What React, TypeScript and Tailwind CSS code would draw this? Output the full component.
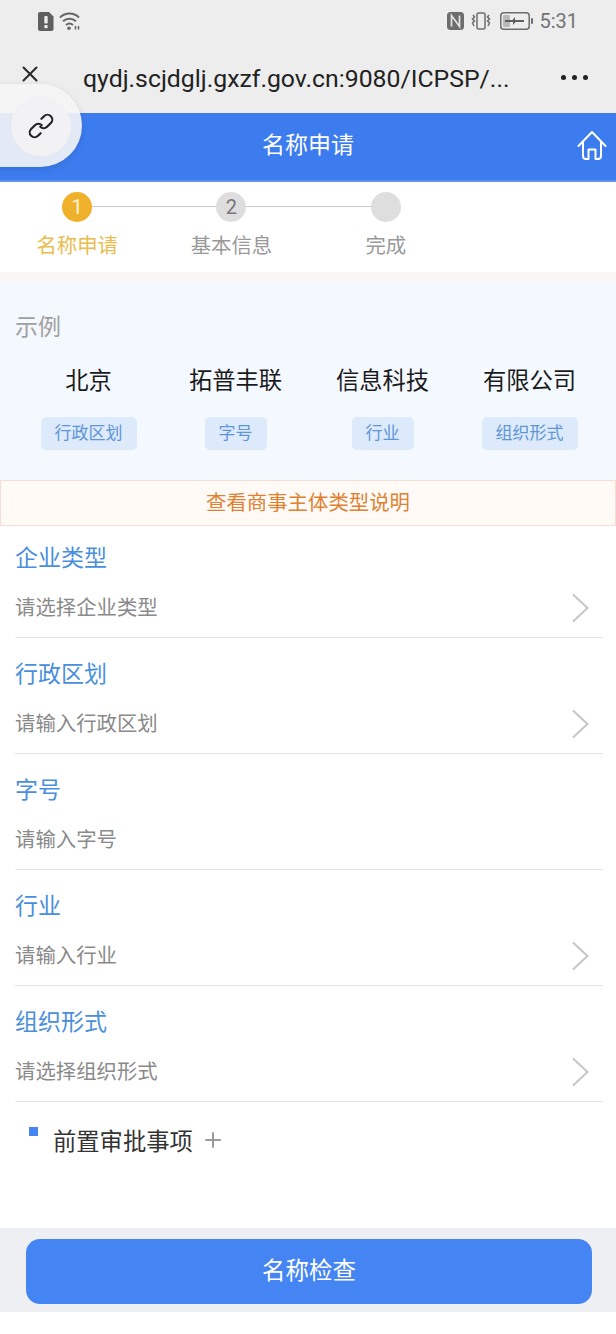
import { Plus, X } from "lucide-react";

const font = { cjk: "font-['Roboto','Noto_Sans_CJK_SC',sans-serif]" };

const exampleColumns = [
  { name: "北京", tag: "行政区划" },
  { name: "拓普丰联", tag: "字号" },
  { name: "信息科技", tag: "行业" },
  { name: "有限公司", tag: "组织形式" },
];

const fields = [
  { label: "企业类型", hint: "请选择企业类型", arrow: true },
  { label: "行政区划", hint: "请输入行政区划", arrow: true },
  { label: "字号", hint: "请输入字号", arrow: false },
  { label: "行业", hint: "请输入行业", arrow: true },
  { label: "组织形式", hint: "请选择组织形式", arrow: true },
];

function StatusBar() {
  return (
    <div className="h-[42px] flex items-center pl-[38px] pr-[38px] text-[#6d6d6d]">
      <svg width="16" height="19" viewBox="0 0 16 19">
        <path d="M2 0h9l4.500 4.500V17a2 2 0 0 1-2 2H2a2 2 0 0 1-2-2V2a2 2 0 0 1 2-2z" fill="#5f5f5f" />
        <rect x="6.300" y="4" width="3.400" height="7.500" rx="1" fill="#ededed" />
        <rect x="6.300" y="13" width="3.400" height="3.200" rx="1" fill="#ededed" />
      </svg>
      <svg className="ml-[5px]" width="23" height="20" viewBox="0 0 23 20" fill="none" stroke="#666" strokeWidth="2">
        <path d="M1 6.500c5.500-5.200 13.500-5.200 19 0" />
        <path d="M4 10.300c3.800-3.300 9.200-3.300 13 0" />
        <path d="M7 14c2.200-1.800 4.800-1.800 7 0" />
        <circle cx="10" cy="17.300" r="1.800" fill="#666" stroke="none" />
        <path d="M16.500 15v3.500M19.500 15v3.500" strokeWidth="1.500" />
      </svg>
      <div className="ml-auto flex items-center">
        <svg width="17" height="18" viewBox="0 0 17 18">
          <rect width="17" height="18" rx="3.500" fill="#6d6d6d" />
          <path d="M4.500 14.500v-11l8 11v-11" fill="none" stroke="#e4e4e4" strokeWidth="1.700" />
        </svg>
        <svg className="ml-[6px]" width="22" height="18" viewBox="0 0 22 18" fill="none" stroke="#6d6d6d" strokeWidth="1.500">
          <rect x="7" y="1" width="8" height="16" rx="1.500" />
          <path d="M3 3l1.500 2-2 2 2 2-2 2 1.500 3M19 3l-1.500 2 2 2-2 2 2 2-1.500 3" />
        </svg>
        <svg className="ml-[8px]" width="33" height="18" viewBox="0 0 33 18" fill="none">
          <rect x="0.800" y="0.800" width="28.400" height="16.400" rx="3" stroke="#6d6d6d" strokeWidth="1.500" />
          <rect x="3" y="3" width="7" height="12" rx="1" fill="#b9b9b9" />
          <path d="M5 8h7.500l2.500-3v3h9v2h-8.500L13 13v-3H5z" fill="#5f5f5f" />
          <rect x="31" y="6" width="2" height="6" rx="1" fill="#6d6d6d" />
        </svg>
        <span className="ml-[6px] text-[20px] font-['Roboto',sans-serif] text-[#747474]">5:31</span>
      </div>
    </div>
  );
}

function BrowserBar() {
  return (
    <div className="h-[71px] flex items-start pl-[17px] pr-[28px] pt-[18px]">
      <X size={26} strokeWidth={1.900} className="text-[#2b2b2b] mt-[1px]" />
      <span className="ml-[40px] text-[24.800px] leading-[38px] text-[#222] font-['Roboto',sans-serif] whitespace-nowrap">
        qydj.scjdglj.gxzf.gov.cn:9080/ICPSP/...
      </span>
      <div className="ml-auto mt-[15px] flex gap-[6px]">
        <span className="w-[5px] h-[5px] rounded-full bg-[#222]" />
        <span className="w-[5px] h-[5px] rounded-full bg-[#222]" />
        <span className="w-[5px] h-[5px] rounded-full bg-[#222]" />
      </div>
    </div>
  );
}

function Steps() {
  return (
    <div className="h-[90px] bg-white pt-[10px]">
      <div className="relative flex w-[463px]">
        <div className="absolute left-[77px] top-[14px] w-[309px] h-px bg-[#c9c9c9]" />
        <Step n="1" label="名称申请" active />
        <Step n="2" label="基本信息" />
        <Step n="" label="完成" />
      </div>
    </div>
  );
}

function Step({ n, label, active }: { n: string; label: string; active?: boolean }) {
  return (
    <div className="relative w-[154.500px] flex flex-col items-center">
      <div
        className={`w-[30px] h-[30px] rounded-full flex items-center justify-center text-[20px] font-['Roboto',sans-serif] ${
          active ? "bg-[#efb12a] text-[#fff3d8]" : "bg-[#dedede] text-[#777]"
        }`}
      >
        {n}
      </div>
      <span className={`mt-[9px] text-[20.400px] leading-[30px] ${active ? "text-[#e9bd4e]" : "text-[#999]"}`}>{label}</span>
    </div>
  );
}

function Example() {
  return (
    <div className="h-[198px] bg-[#f4f8ff] pl-[15px] pr-[13px] pt-[30px]">
      <div className="text-[23px] leading-[32px] text-[#a0a0a0]">示例</div>
      <div className="grid grid-cols-4 mt-[20px]">
        {exampleColumns.map((c) => (
          <div key={c.name} className="flex flex-col items-center">
            <span className="text-[23.300px] leading-[34px] text-[#1b1b1b]">{c.name}</span>
            <span className="mt-[19px] h-[33px] px-[14px] rounded-[5px] bg-[#dceafc] text-[17px] leading-[33px] text-[#5f95d6]">
              {c.tag}
            </span>
          </div>
        ))}
      </div>
    </div>
  );
}

function Field({ label, hint, arrow, first }: { label: string; hint: string; arrow: boolean; first: boolean }) {
  return (
    <div className={`ml-[15px] mr-[13px] border-b border-[#e4e4e4] ${first ? "h-[111.500px] pt-[16px]" : "h-[116px] pt-[20px]"}`}>
      <div className="text-[23px] leading-[34px] text-[#4a8fdc]">{label}</div>
      <div className="mt-[17px] flex items-center justify-between pr-[14px]">
        <span className="text-[20.400px] leading-[30px] text-[#8a8a8a]">{hint}</span>
        {arrow && (
          <svg width="18" height="30" viewBox="0 0 18 30" fill="none" stroke="#c8c8c8" strokeWidth="2.200">
            <path d="M2 1.500 16.500 15 2 28.500" />
          </svg>
        )}
      </div>
    </div>
  );
}

export default function App() {
  return (
    <div className={`relative w-[616px] h-[1334px] bg-white overflow-hidden ${font.cjk}`}>
      <div className="bg-[#ededed]">
        <StatusBar />
        <BrowserBar />
      </div>

      <div className="h-[69px] bg-[#3d7cef] border-b-2 border-[#5d92f2] flex items-center justify-center relative">
        <span className="text-[23px] text-white">名称申请</span>
        <svg className="absolute right-[9px] top-[17px]" width="30" height="31" viewBox="0 0 30 31" fill="none" stroke="white" strokeWidth="2" strokeLinecap="round" strokeLinejoin="round">
          <path d="M1.500 16 15 2l13.500 14" />
          <path d="M6 12.500V26a3 3 0 0 0 3 3h2.500V19.500h7V29H21a3 3 0 0 0 3-3V12.500" />
        </svg>
      </div>

      <Steps />
      <div className="h-[10px] bg-[#f8f5f5]" />
      <Example />

      <div className="h-[46px] bg-[#fffaf6] border border-[#f6ded4] flex items-center justify-center text-[20.400px] text-[#de8232]">
        查看商事主体类型说明
      </div>

      {fields.map((f, i) => (
        <Field key={f.label} label={f.label} hint={f.hint} arrow={f.arrow} first={i === 0} />
      ))}

      <div className="flex items-start pl-[29px] h-[126.500px] pt-[24px]">
        <span className="w-[9px] h-[9px] mt-[1px] bg-[#4585f3]" />
        <span className="ml-[15px] text-[23.300px] leading-[32px] text-[#333]">前置审批事项</span>
        <Plus size={24} strokeWidth={2} className="ml-[8px] mt-[2px] text-[#9a9a9a]" />
      </div>

      <div className="h-[84px] bg-[#eeeff3] pt-[11px] pl-[26px]">
        <div className="w-[566px] h-[65px] rounded-[14px] bg-[#4585f3] flex items-center justify-center text-[23.500px] text-white">
          名称检查
        </div>
      </div>

      {/* floating link pill over the browser bar */}
      <div className="absolute left-[-80px] top-[84px] w-[162px] h-[83px] rounded-full bg-[#f6f5f6]/90 shadow-[0_2px_6px_rgba(0,0,0,0.12)] flex items-center justify-end pr-[11px]">
        <div className="w-[60px] h-[60px] rounded-full bg-[#f2f2f4] flex items-center justify-center">
          <svg width="30" height="30" viewBox="0 0 28 28" fill="none" stroke="#222" strokeWidth="2" strokeLinecap="round">
            <g transform="rotate(-45 14 14)">
              <path d="M15 14a4.500 4.500 0 0 0-4.500-4.500h-5a4.500 4.500 0 0 0 0 9H9" />
              <path d="M13 14a4.500 4.500 0 0 0 4.500 4.500h5a4.500 4.500 0 0 0 0-9H19" />
            </g>
          </svg>
        </div>
      </div>
    </div>
  );
}
